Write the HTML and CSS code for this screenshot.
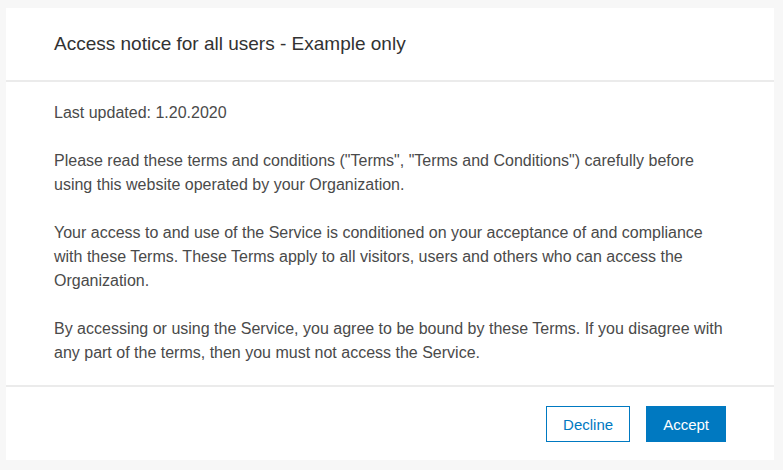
FILE: index.html
```html
<!DOCTYPE html>
<html lang="en">
<head>
    <meta charset="UTF-8">
    <meta name="viewport" content="width=device-width, initial-scale=1.0">
    <title>Access notice</title>
    <link rel="stylesheet" href="styles.css">
</head>
<body>
    <div class="modal">
        <div class="modal-header">
            <h2 class="modal-title">Access notice for all users - Example only</h2>
        </div>

        <div class="modal-body">
            <p>Last updated: 1.20.2020</p>
            <p>Please read these terms and conditions ("Terms", "Terms and Conditions") carefully before using this website operated by your Organization.</p>
            <p>Your access to and use of the Service is conditioned on your acceptance of and compliance with these Terms. These Terms apply to all visitors, users and others who can access the Organization.</p>
            <p>By accessing or using the Service, you agree to be bound by these Terms. If you disagree with any part of the terms, then you must not access the Service.</p>
        </div>

        <div class="modal-footer">
            <button class="btn btn-clear">Decline</button>
            <button class="btn btn-primary">Accept</button>
        </div>
    </div>
</body>
</html>
```

FILE: styles.css
```css
:root {
    --blue: #0079c1;
    --text: #4a4a4a;
    --title: #323232;
    --border: #ebebeb;
    --page: #f7f7f7;
}

* {
    margin: 0;
    padding: 0;
    box-sizing: border-box;
    font-family: 'Liberation Sans', Arial, sans-serif;
}

body {
    background: var(--page);
}

.modal {
    margin: 8px 9px 10px 6px;
    background: #fff;
    display: flex;
    flex-direction: column;
}

.modal-header {
    height: 74px;
    padding: 0 48px;
    display: flex;
    align-items: center;
    border-bottom: 2px solid var(--border);
}

.modal-title {
    font-size: 19px;
    font-weight: 400;
    color: var(--title);
}

.modal-body {
    padding: 19px 48px 20px;
    color: var(--text);
    font-size: 16px;
    line-height: 24px;
}

.modal-body p + p {
    margin-top: 24px;
}

.modal-footer {
    border-top: 2px solid var(--border);
    padding: 19px 48px 18px;
    display: flex;
    justify-content: flex-end;
    gap: 16px;
}

.btn {
    height: 36px;
    padding: 0 16px;
    font-size: 15px;
    border: 1px solid var(--blue);
    cursor: pointer;
}

.btn-clear {
    background: #fff;
    color: var(--blue);
}

.btn-primary {
    background: var(--blue);
    color: #fff;
}
```
